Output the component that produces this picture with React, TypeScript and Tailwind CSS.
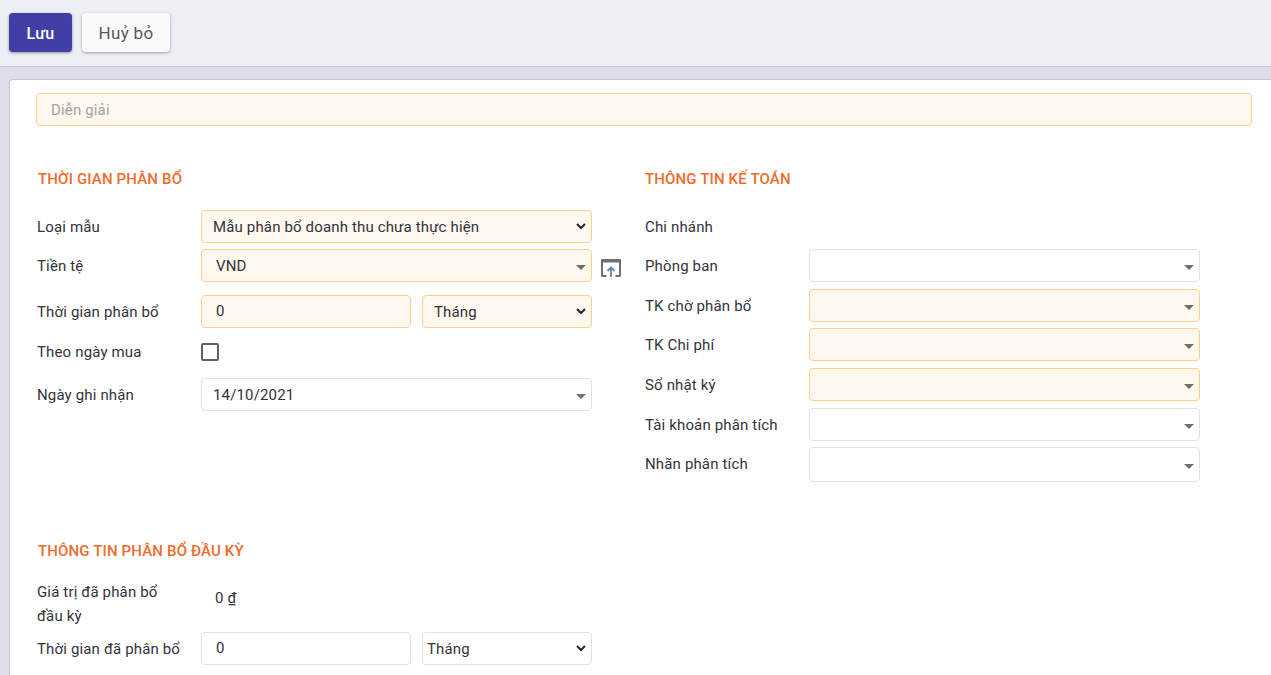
import React from 'react';

const warm = 'bg-[#fff8ef] border-[#fdd08a]';
const plain = 'bg-white border-[#e2e2e2]';

const Caret = () => (
    <svg className="absolute right-[5px] top-1/2 -translate-y-[1px]" width="10" height="5" viewBox="0 0 10 5">
        <path d="M0 0h10L5 5z" fill="#6f6f6f" />
    </svg>
);

const Combo: React.FC<{ value?: string; warmBg?: boolean; className?: string; pad?: string }> = ({ value, warmBg, className, pad }) => (
    <div className={`relative w-full h-[33px] border rounded-[4px] pt-px flex items-center ${pad || 'pl-[11px]'} ${warmBg ? warm : plain} ${className || ''}`}>
        {value}
        <Caret />
    </div>
);

const Select: React.FC<{ value: string; warmBg?: boolean; className?: string; pad?: string }> = ({ value, warmBg, className, pad }) => (
    <div className={`relative h-[33px] ${className || ''}`}>
        <select
            defaultValue={value}
            className={`w-full h-full border rounded-[4px] pt-[2px] outline-none appearance-none ${pad || 'pl-[11px]'} ${warmBg ? warm : plain}`}
        >
            <option>{value}</option>
        </select>
        <svg className="absolute right-[6px] top-[13px] pointer-events-none" width="10" height="7" viewBox="0 0 10 7" fill="none">
            <path d="M1 1l4 4 4-4" stroke="#26262b" strokeWidth="2" />
        </svg>
    </div>
);

const Label: React.FC<{ children: React.ReactNode }> = ({ children }) => (
    <div className="w-[165px] shrink-0 pl-px leading-[24px]">{children}</div>
);

const Heading: React.FC<{ children: React.ReactNode; className?: string }> = ({ children, className }) => (
    <div className={`font-medium text-[#ee6c2b] uppercase leading-[20px] ${className || ''}`}>{children}</div>
);

const RightRow: React.FC<{ label: string; warmBg?: boolean; tall?: boolean; top?: string }> = ({ label, warmBg, tall, top }) => (
    <div className={`flex items-center ${top || 'mt-[7px]'}`}>
        <div className={`w-[164px] shrink-0 leading-[24px] ${tall ? 'pb-[2px]' : ''}`}>{label}</div>
        <Combo warmBg={warmBg} className={tall ? 'w-[391px]! h-[35px]!' : 'w-[391px]!'} />
    </div>
);

const App: React.FC<{}> = () => (
    <div className="h-[675px] overflow-hidden bg-[#dcdeeb] text-[15px] text-[#33333b] tracking-[0.15px]" style={{ fontFamily: 'Roboto, sans-serif' }}>
        <div className="h-[67px] bg-[#eeeff5] border-b border-[#c6c7d2] pl-[9px] pt-[13px] flex gap-[10px] items-start">
            <button type="button" className="w-[63px] h-[39px] pt-[2px] rounded-[4px] bg-[#413ea6] text-white font-medium text-[16px] tracking-[0.3px] shadow-[0_1px_3px_rgba(0,0,0,0.4)]">
                Lưu
            </button>
            <button type="button" className="w-[88px] h-[39px] pt-[2px] rounded-[4px] bg-[#fafafa] text-[#5b5560] text-[17px] tracking-[0.3px] shadow-[0_1px_3px_rgba(0,0,0,0.35)]">
                Huỷ bỏ
            </button>
        </div>
        <div className="ml-[9px] mt-[12px] h-[596px] bg-white rounded-tl-[4px] border-l border-t border-[#c3c4cc] pl-[26px] pt-[13px]">
            <div className={`h-[33px] w-[1216px] border rounded-[4px] pt-px flex items-center pl-[14px] text-[#a8a39d] ${warm}`}>
                Diễn giải
            </div>
            <div className="flex">
                <div className="w-[609px] shrink-0">
                    <div className="mt-[43px]">
                        <Heading className="pl-[2px]">Thời gian phân bổ</Heading>
                    </div>
                    <div className="flex items-center mt-[21px] w-[556px]">
                        <Label>Loại mẫu</Label>
                        <Select value="Mẫu phân bổ doanh thu chưa thực hiện" warmBg className="w-[391px]" />
                    </div>
                    <div className="flex items-center mt-[6px] w-[556px] relative">
                        <Label>Tiền tệ</Label>
                        <Combo value="VND" warmBg pad="pl-[14px]" />
                        <svg className="absolute left-[565px] top-[10px]" width="20" height="18" viewBox="0 0 20 18" fill="none">
                            <path d="M5.5 17H1.5A.5.5 0 0 1 1 16.5V2h18v14.5a.5.5 0 0 1-.5.5H14.5" stroke="#6b7178" strokeWidth="2" />
                            <path d="M1 0h18a1 1 0 0 1 1 1v2.5H0V1a1 1 0 0 1 1-1z" fill="#6b7178" />
                            <path d="M10 18V9M6.5 12L10 8.5l3.5 3.5" stroke="#5f88a8" strokeWidth="1.8" />
                        </svg>
                    </div>
                    <div className="flex items-center mt-[13px] w-[556px]">
                        <Label>Thời gian phân bổ</Label>
                        <div className={`w-[210px] h-[33px] border rounded-[4px] flex items-center pl-[14px] ${warm}`}>0</div>
                        <Select value="Tháng" warmBg className="w-[170px] ml-[11px]" />
                    </div>
                    <div className="flex items-center mt-[14px] w-[556px] h-[19px]">
                        <Label>Theo ngày mua</Label>
                        <div className="w-[18px] h-[18px] border-2 border-[#636363] rounded-[2px]" />
                    </div>
                    <div className="flex items-center mt-[17px] w-[556px]">
                        <Label>Ngày ghi nhận</Label>
                        <Combo value="14/10/2021" />
                    </div>
                    <div className="mt-[130px]">
                        <Heading className="pl-[2px]">Thông tin phân bổ đầu kỳ</Heading>
                    </div>
                    <div className="flex items-start mt-[19px] w-[556px]">
                        <Label>
                            <div className="w-[130px]">Giá trị đã phân bổ đầu kỳ</div>
                        </Label>
                        <div className="pl-[14px] mt-[6px] leading-[24px]">
                            0 <span className="underline">₫</span>
                        </div>
                    </div>
                    <div className="flex items-center mt-[4px] w-[556px]">
                        <Label>Thời gian đã phân bổ</Label>
                        <div className={`w-[210px] h-[33px] border rounded-[4px] flex items-center pl-[14px] ${plain}`}>0</div>
                        <Select value="Tháng" className="w-[170px] ml-[11px]" pad="pl-[4px]" />
                    </div>
                </div>
                <div>
                    <div className="mt-[43px]">
                        <Heading>Thông tin kế toán</Heading>
                    </div>
                    <div className="mt-[26px] leading-[24px]">Chi nhánh</div>
                    <RightRow label="Phòng ban" top="mt-[10px]" />
                    <RightRow label="TK chờ phân bổ" warmBg />
                    <RightRow label="TK Chi phí" warmBg top="mt-[6px]" />
                    <RightRow label="Sổ nhật ký" warmBg />
                    <RightRow label="Tài khoản phân tích" />
                    <RightRow label="Nhãn phân tích" tall top="mt-[6px]" />
                </div>
            </div>
        </div>
    </div>
);
export default App;
